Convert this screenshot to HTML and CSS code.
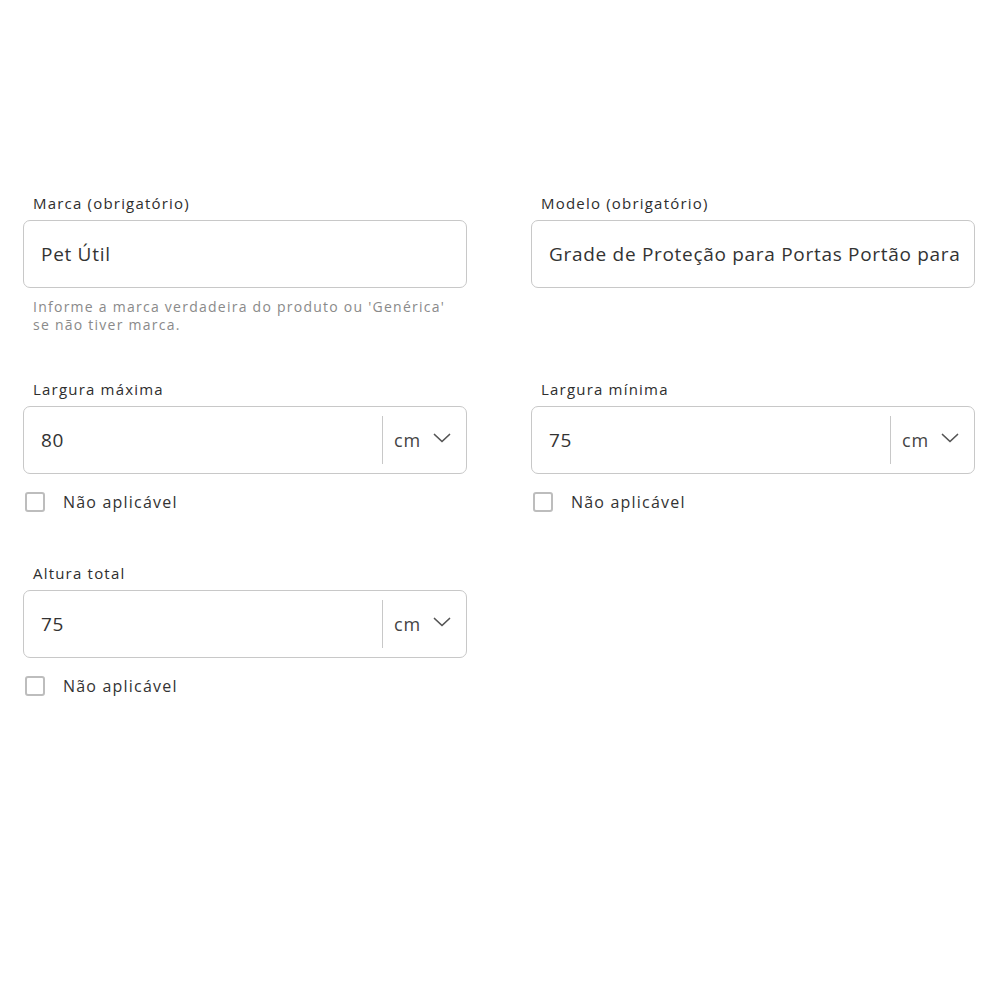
FILE: index.html
```html
<!DOCTYPE html>
<html lang="pt-BR">
<head>
<meta charset="utf-8">
<title>Formulário</title>
<link rel="stylesheet" href="styles.css">
</head>
<body>
<div class="form">
  <div class="field">
    <div class="label">Marca (obrigatório)</div>
    <div class="box"><div class="value">Pet Útil</div></div>
    <div class="helper">Informe a marca verdadeira do produto ou 'Genérica'<br>se não tiver marca.</div>
  </div>
  <div class="field">
    <div class="label">Modelo (obrigatório)</div>
    <div class="box"><div class="value clip">Grade de Proteção para Portas Portão para Cachorro</div></div>
  </div>

  <div class="field">
    <div class="label">Largura máxima</div>
    <div class="box">
      <div class="value">80</div>
      <div class="unit"><span class="divider"></span><span class="unit-text">cm</span>
        <svg class="chev" width="18" height="10" viewBox="0 0 18 10"><path d="M1.5 1.5 L9 8.5 L16.5 1.5" fill="none" stroke="#555" stroke-width="1.7" stroke-linecap="round" stroke-linejoin="round"/></svg>
      </div>
    </div>
    <div class="check"><span class="cb"></span><span>Não aplicável</span></div>
  </div>
  <div class="field">
    <div class="label">Largura mínima</div>
    <div class="box">
      <div class="value">75</div>
      <div class="unit"><span class="divider"></span><span class="unit-text">cm</span>
        <svg class="chev" width="18" height="10" viewBox="0 0 18 10"><path d="M1.5 1.5 L9 8.5 L16.5 1.5" fill="none" stroke="#555" stroke-width="1.7" stroke-linecap="round" stroke-linejoin="round"/></svg>
      </div>
    </div>
    <div class="check"><span class="cb"></span><span>Não aplicável</span></div>
  </div>

  <div class="field">
    <div class="label">Altura total</div>
    <div class="box">
      <div class="value">75</div>
      <div class="unit"><span class="divider"></span><span class="unit-text">cm</span>
        <svg class="chev" width="18" height="10" viewBox="0 0 18 10"><path d="M1.5 1.5 L9 8.5 L16.5 1.5" fill="none" stroke="#555" stroke-width="1.7" stroke-linecap="round" stroke-linejoin="round"/></svg>
      </div>
    </div>
    <div class="check"><span class="cb"></span><span>Não aplicável</span></div>
  </div>
</div>
</body>
</html>
```
FILE: styles.css
```css
html, body {
  margin: 0;
  padding: 0;
  background: #fff;
}
body {
  font-family: "Open Sans", "Liberation Sans", sans-serif;
  color: #333;
}
.form {
  display: grid;
  grid-template-columns: 444px 444px;
  column-gap: 64px;
  row-gap: 45px;
  align-items: start;
  padding: 193px 0 0 23px;
}
.label {
  font-size: 15px;
  letter-spacing: 1.2px;
  line-height: 20px;
  color: #2e2e2e;
  padding-left: 10px;
  margin-bottom: 7px;
}
.box {
  box-sizing: border-box;
  height: 68px;
  border: 1px solid #c8c8c8;
  border-radius: 7px;
  display: flex;
  align-items: center;
  padding-left: 17px;
  overflow: hidden;
}
.value {
  flex: 1;
  font-size: 19px;
  letter-spacing: 0.7px;
  color: #333;
  white-space: nowrap;
  overflow: hidden;
  min-width: 0;
}
.value.clip {
  margin-right: 15px;
}
.unit {
  display: flex;
  align-items: center;
  align-self: stretch;
  padding: 9px 15px 9px 0;
}
.divider {
  width: 1px;
  align-self: stretch;
  background: #c8c8c8;
  margin-right: 11px;
}
.unit-text {
  font-size: 18px;
  letter-spacing: 0.8px;
  color: #444;
  margin-right: 12px;
}
.chev {
  display: block;
  margin-top: -4px;
}
.helper {
  margin-top: 10px;
  padding-left: 10px;
  font-size: 14px;
  letter-spacing: 1.25px;
  line-height: 18px;
  color: #8a8a8a;
}
.check {
  margin-top: 18px;
  display: flex;
  align-items: center;
  font-size: 16px;
  letter-spacing: 1.2px;
  color: #333;
  height: 20px;
  padding-bottom: 6px;
}
.cb {
  box-sizing: border-box;
  width: 20px;
  height: 20px;
  border: 2px solid #bdbdbd;
  border-radius: 3px;
  margin-left: 2px;
  margin-right: 18px;
}
```
